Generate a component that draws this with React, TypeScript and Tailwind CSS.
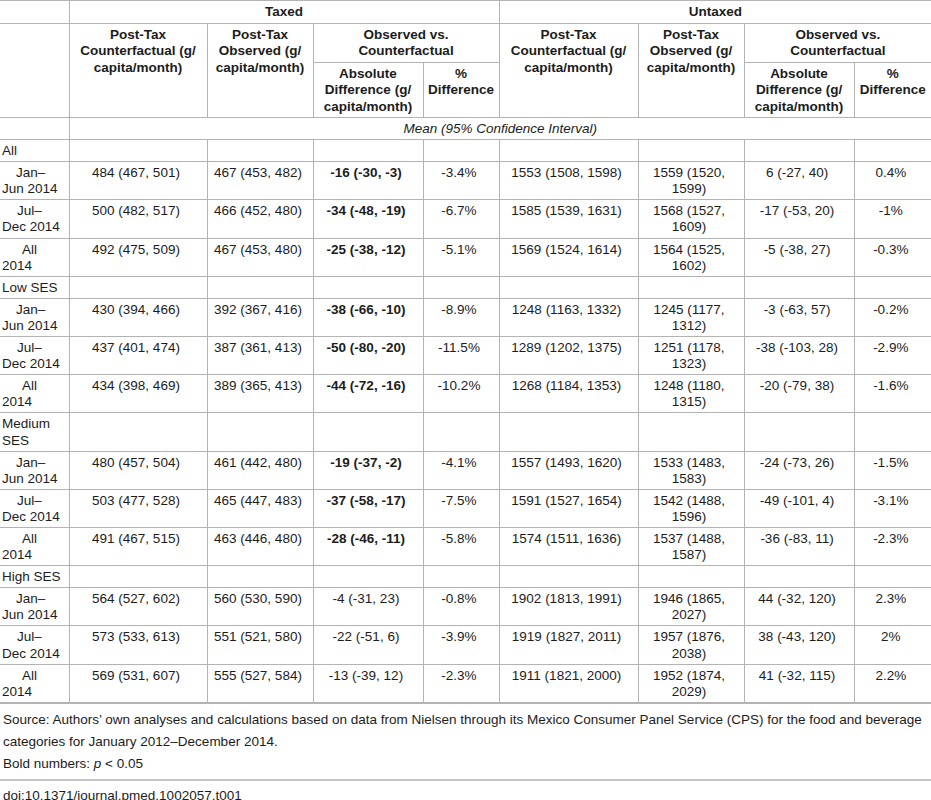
import React from "react";

type Row = {
  label: [string, string];
  indent: string;
  cells: string[];
  bold: boolean;
};

type Section = { title: string; rows: Row[] };

const JAN = { label: ["Jan–", "Jun 2014"] as [string, string], indent: "pl-[14px]" };
const JUL = { label: ["Jul–", "Dec 2014"] as [string, string], indent: "pl-[15px]" };
const ALL = { label: ["All", "2014"] as [string, string], indent: "pl-[20px]" };

const sections: Section[] = [
  {
    title: "All",
    rows: [
      { ...JAN, bold: true, cells: ["484 (467, 501)", "467 (453, 482)", "-16 (-30, -3)", "-3.4%", "1553 (1508, 1598)", "1559 (1520, 1599)", "6 (-27, 40)", "0.4%"] },
      { ...JUL, bold: true, cells: ["500 (482, 517)", "466 (452, 480)", "-34 (-48, -19)", "-6.7%", "1585 (1539, 1631)", "1568 (1527, 1609)", "-17 (-53, 20)", "-1%"] },
      { ...ALL, bold: true, cells: ["492 (475, 509)", "467 (453, 480)", "-25 (-38, -12)", "-5.1%", "1569 (1524, 1614)", "1564 (1525, 1602)", "-5 (-38, 27)", "-0.3%"] },
    ],
  },
  {
    title: "Low SES",
    rows: [
      { ...JAN, bold: true, cells: ["430 (394, 466)", "392 (367, 416)", "-38 (-66, -10)", "-8.9%", "1248 (1163, 1332)", "1245 (1177, 1312)", "-3 (-63, 57)", "-0.2%"] },
      { ...JUL, bold: true, cells: ["437 (401, 474)", "387 (361, 413)", "-50 (-80, -20)", "-11.5%", "1289 (1202, 1375)", "1251 (1178, 1323)", "-38 (-103, 28)", "-2.9%"] },
      { ...ALL, bold: true, cells: ["434 (398, 469)", "389 (365, 413)", "-44 (-72, -16)", "-10.2%", "1268 (1184, 1353)", "1248 (1180, 1315)", "-20 (-79, 38)", "-1.6%"] },
    ],
  },
  {
    title: "Medium SES",
    rows: [
      { ...JAN, bold: true, cells: ["480 (457, 504)", "461 (442, 480)", "-19 (-37, -2)", "-4.1%", "1557 (1493, 1620)", "1533 (1483, 1583)", "-24 (-73, 26)", "-1.5%"] },
      { ...JUL, bold: true, cells: ["503 (477, 528)", "465 (447, 483)", "-37 (-58, -17)", "-7.5%", "1591 (1527, 1654)", "1542 (1488, 1596)", "-49 (-101, 4)", "-3.1%"] },
      { ...ALL, bold: true, cells: ["491 (467, 515)", "463 (446, 480)", "-28 (-46, -11)", "-5.8%", "1574 (1511, 1636)", "1537 (1488, 1587)", "-36 (-83, 11)", "-2.3%"] },
    ],
  },
  {
    title: "High SES",
    rows: [
      { ...JAN, bold: false, cells: ["564 (527, 602)", "560 (530, 590)", "-4 (-31, 23)", "-0.8%", "1902 (1813, 1991)", "1946 (1865, 2027)", "44 (-32, 120)", "2.3%"] },
      { ...JUL, bold: false, cells: ["573 (533, 613)", "551 (521, 580)", "-22 (-51, 6)", "-3.9%", "1919 (1827, 2011)", "1957 (1876, 2038)", "38 (-43, 120)", "2%"] },
      { ...ALL, bold: false, cells: ["569 (531, 607)", "555 (527, 584)", "-13 (-39, 12)", "-2.3%", "1911 (1821, 2000)", "1952 (1874, 2029)", "41 (-32, 115)", "2.2%"] },
    ],
  },
];

const line = "border-[#b3b3b3]";
const th = `border-t border-l ${line} align-top text-center font-bold leading-[16.5px] pt-[3px] pb-[2px] px-[3px]`;
const td = `border-t border-l ${line} align-top text-center leading-[16.1px] pt-[3px] pb-[2px] pl-[2px] pr-[6px]`;
const first = `border-t ${line} align-top text-left leading-[16.1px] pt-[3px] pb-[2px] pl-[2px] pr-[2px]`;

function HeaderCells() {
  return (
    <>
      <th rowSpan={2} className={th}>
        Post-Tax<br />Counterfactual (g/<br />capita/month)
      </th>
      <th rowSpan={2} className={th}>
        Post-Tax<br />Observed (g/<br />capita/month)
      </th>
      <th colSpan={2} className={th}>
        Observed vs.<br />Counterfactual
      </th>
    </>
  );
}

function SubHeaderCells() {
  return (
    <>
      <th className={th}>
        Absolute<br />Difference (g/<br />capita/month)
      </th>
      <th className={th}>
        %<br />Difference
      </th>
    </>
  );
}

export default function App() {
  return (
    <div className="w-[931px] bg-white text-[#1c1c1c] text-[13.5px] font-['Liberation_Sans',Arial,sans-serif]">
      <table className="w-[931px] table-fixed border-collapse">
        <colgroup>
          <col className="w-[69px]" />
          <col className="w-[138px]" />
          <col className="w-[106px]" />
          <col className="w-[110px]" />
          <col className="w-[76px]" />
          <col className="w-[139px]" />
          <col className="w-[106px]" />
          <col className="w-[110px]" />
          <col className="w-[77px]" />
        </colgroup>
        <thead>
          <tr>
            <th className={`border-t ${line}`}></th>
            <th colSpan={4} className={th}>Taxed</th>
            <th colSpan={4} className={th}>Untaxed</th>
          </tr>
          <tr>
            <th rowSpan={2} className={`border-t ${line}`}></th>
            <HeaderCells />
            <HeaderCells />
          </tr>
          <tr>
            <SubHeaderCells />
            <SubHeaderCells />
          </tr>
          <tr>
            <td className={first}></td>
            <td colSpan={8} className={`${td} italic !pr-[2px]`}>
              Mean (95% Confidence Interval)
            </td>
          </tr>
        </thead>
        <tbody>
          {sections.map((s) => (
            <React.Fragment key={s.title}>
              <tr>
                <td className={first}>{s.title}</td>
                {Array.from({ length: 8 }).map((_, i) => (
                  <td key={i} className={td}></td>
                ))}
              </tr>
              {s.rows.map((r, ri) => (
                <tr key={ri}>
                  <td className={first}>
                    <div className={r.indent}>{r.label[0]}</div>
                    <div>{r.label[1]}</div>
                  </td>
                  {r.cells.map((c, ci) => (
                    <td key={ci} className={`${td} ${r.bold && ci === 2 ? "font-bold" : ""}`}>
                      {c}
                    </td>
                  ))}
                </tr>
              ))}
            </React.Fragment>
          ))}
        </tbody>
      </table>
      <div className="border-t-2 border-[#b3b3b3] pt-[5px] pl-[3px] leading-[22px]">
        <p>
          Source: Authors’ own analyses and calculations based on data from Nielsen through its Mexico Consumer Panel Service (CPS) for the food and beverage categories for January 2012–December 2014.
        </p>
        <p>
          Bold numbers: <i>p</i> &lt; 0.05
        </p>
      </div>
      <div className="mt-[4px] border-t-2 border-[#c4c4c4] pt-[5px] pl-[3px] leading-[20px]">
        doi:10.1371/journal.pmed.1002057.t001
      </div>
    </div>
  );
}
